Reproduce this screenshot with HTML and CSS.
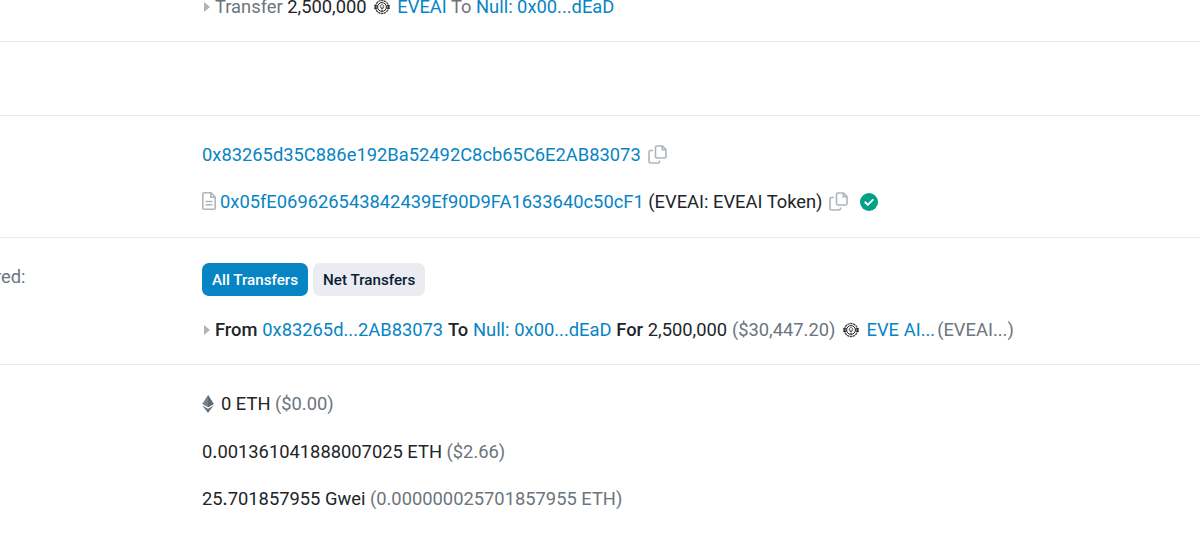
FILE: index.html
```html
<!DOCTYPE html>
<html lang="en">
<head>
    <meta charset="UTF-8">
    <meta name="viewport" content="width=device-width, initial-scale=1.0">
    <title>Transaction Details</title>
    <link rel="stylesheet" href="styles.css">
</head>
<body>

    <!-- Shared icons -->
    <svg class="sprite" width="0" height="0">
        <symbol id="copy" viewBox="0 0 19 19">
            <path d="M9 1h5.500L18 4.500V11.500a1.500 1.500 0 0 1-1.500 1.500H9a1.500 1.500 0 0 1-1.500-1.500V2.500A1.500 1.500 0 0 1 9 1zM14.300 1.500v3.200H17.500M5 5.500H2.500A1.500 1.500 0 0 0 1 7v9.500A1.500 1.500 0 0 0 2.500 18h7.500a1.500 1.500 0 0 0 1.500-1.500V15.500" fill="none" stroke="#adb5bd" stroke-width="1.600"/>
        </symbol>
        <symbol id="token" viewBox="0 0 16 16">
            <circle cx="8" cy="8" r="6.500" fill="none" stroke="#444" stroke-width="1.300" stroke-dasharray="2.400 .5"/>
            <circle cx="8" cy="8" r="4.400" fill="none" stroke="#222" stroke-width="1"/>
            <path d="M0 6.200h3.500v1.200H0zM0 8.600h3.500v1.200H0zM12.500 6.200H16v1.200h-3.500zM12.500 8.600H16v1.200h-3.500z" fill="#222"/>
            <path d="M8 10V7.600M6.300 8a1.800 1.800 0 1 1 3.400 0L8.800 9.500H7.200zM7 11.300h2" fill="none" stroke="#333" stroke-width=".8"/>
        </symbol>
    </svg>

    <div class="details">
        <div class="row row-action">
            <div class="label"></div>
            <div class="value">
                <div class="line"><span class="caret"></span><span class="muted">Transfer</span> 2,500,000 <svg class="token"><use href="#token"/></svg> <a href="#">EVEAI</a> <span class="muted">To</span> <a href="#">Null: 0x00...dEaD</a></div>
            </div>
        </div>

        <div class="row row-empty"></div>

        <div class="row row-address">
            <div class="label"></div>
            <div class="value">
                <div class="line"><a href="#">0x83265d35C886e192Ba52492C8cb65C6E2AB83073</a><svg class="copy"><use href="#copy"/></svg></div>
                <div class="line"><svg class="file" viewBox="0 0 14 18"><path d="M2.200.8H9L13.200 5v10.800a1.400 1.400 0 0 1-1.400 1.400H2.200A1.400 1.400 0 0 1 .8 15.800V2.200A1.400 1.400 0 0 1 2.200.8zM8.800.8v4.400h4.400M3.500 9.500h7M3.500 12.800h7" fill="none" stroke="#adb5bd" stroke-width="1.600"/></svg><a href="#">0x05fE069626543842439Ef90D9FA1633640c50cF1</a> (EVEAI: EVEAI Token)<svg class="copy"><use href="#copy"/></svg><svg class="check" viewBox="0 0 18 18"><circle cx="9" cy="9" r="9" fill="#00a186"/><path d="M5.200 9.300l2.600 2.500 5-5" fill="none" stroke="#fff" stroke-width="1.900" stroke-linecap="round" stroke-linejoin="round"/></svg></div>
            </div>
        </div>

        <div class="row row-transfers">
            <div class="label">red:</div>
            <div class="value">
                <div class="tabs">
                    <button class="tab active" type="button">All Transfers</button>
                    <button class="tab" type="button">Net Transfers</button>
                </div>
                <div class="line"><span class="caret"></span><b>From</b> <a href="#">0x83265d...2AB83073</a> <b>To</b> <a href="#">Null: 0x00...dEaD</a> <b>For</b> 2,500,000 <span class="muted">($30,447.20)</span> <svg class="token"><use href="#token"/></svg> <a href="#">EVE AI...</a><span class="muted symbol">(EVEAI...)</span></div>
            </div>
        </div>

        <div class="row row-value">
            <div class="label"></div>
            <div class="value">
                <div class="line"><svg class="eth" viewBox="0 0 12 18"><path d="M6 0l5.700 9L6 12.200.3 9z" fill="#77818b"/><path d="M6 0l5.700 9L6 12.200z" fill="#5f6973"/><path d="M.3 10.500L6 13.700l5.700-3.200L6 18z" fill="#6c757d"/></svg>0 ETH <span class="muted">($0.00)</span></div>
                <div class="line">0<b>.</b>001361041888007025 ETH <span class="muted">($2.66)</span></div>
                <div class="line">25<b>.</b>701857955 Gwei <span class="muted">(0.000000025701857955 ETH)</span></div>
            </div>
        </div>
    </div>

</body>
</html>
```
FILE: styles.css
```css
html {
    overflow: hidden;
}
body {
    font-family: Roboto, Arial, sans-serif;
    font-size: 18.330px;
    line-height: 24px;
    color: #212529;
    background-color: #fff;
    margin: 0;
}
.sprite {
    display: block;
}
/* scrolled slightly past the first row */
.details {
    margin-top: -5px;
}
.row {
    display: grid;
    grid-template-columns: 202px 1fr;
    box-sizing: border-box;
    border-bottom: 1px solid #e9ecef;
}
.row-action {
    height: 47px;
}
.row-empty {
    height: 74px;
}
.row-address {
    height: 122px;
    padding-top: 27px;
}
.row-transfers {
    height: 127px;
    padding-top: 25px;
}
.row-value {
    padding-top: 27px;
    border-bottom: none;
}
.value {
    display: grid;
    align-content: start;
    row-gap: 23.500px;
}
.row-address .value {
    row-gap: 23px;
}
.row-transfers .value {
    row-gap: 22px;
    word-spacing: .2px;
}
.line {
    height: 24px;
    white-space: nowrap;
}
.label {
    color: #6c757d;
    padding-top: 2px;
    margin-left: -5px;
}
a {
    color: #0784c3;
    text-decoration: none;
}
b {
    font-weight: 500;
}
.muted {
    color: #6c757d;
}
.symbol {
    margin-left: 2px;
}
.caret {
    display: inline-block;
    margin: 0 5px 0 2px;
    border-left: 6.500px solid #adb5bd;
    border-top: 5px solid transparent;
    border-bottom: 5px solid transparent;
    vertical-align: 1px;
}
.token {
    width: 16px;
    height: 16px;
    margin: 0 2.800px;
    vertical-align: -2px;
}
.copy {
    width: 19px;
    height: 19px;
    margin-left: 7px;
    vertical-align: -3px;
}
.file {
    width: 14px;
    height: 18px;
    margin-right: 4px;
    vertical-align: -2px;
}
.check {
    width: 18px;
    height: 18px;
    margin-left: 12px;
    vertical-align: -3px;
}
.eth {
    width: 12px;
    height: 18px;
    margin-right: 7px;
    vertical-align: -3px;
}
.tabs {
    display: flex;
    gap: 5px;
}
.tab {
    height: 33px;
    padding: 0 10px;
    border: none;
    border-radius: 7px;
    background-color: #ebecf1;
    color: #081d35;
    font-family: inherit;
    font-size: 15.200px;
    font-weight: 500;
    word-spacing: 0;
}
.tab.active {
    background-color: #0784c3;
    color: #fff;
}
```
